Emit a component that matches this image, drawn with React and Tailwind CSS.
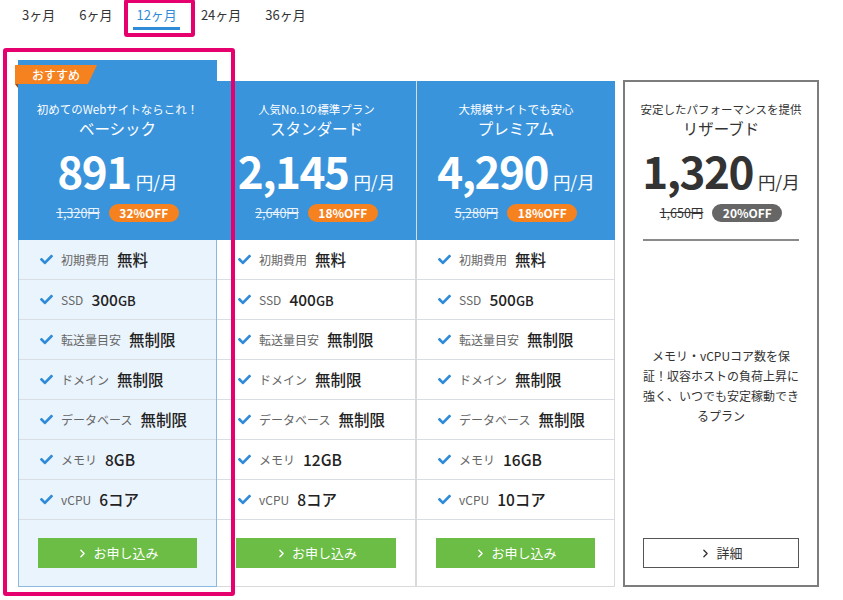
import { FaCheck } from 'react-icons/fa'
import { ChevronRight } from 'lucide-react'

const plans = [
  {
    id: 'basic',
    sub: '初めてのWebサイトならこれ！',
    name: 'ベーシック',
    price: '891',
    old: '1,320円',
    off: '32%OFF',
    ssd: '300',
    mem: '8GB',
    cpu: '6コア',
  },
  {
    id: 'standard',
    sub: '人気No.1の標準プラン',
    name: 'スタンダード',
    price: '2,145',
    old: '2,640円',
    off: '18%OFF',
    ssd: '400',
    mem: '12GB',
    cpu: '8コア',
  },
  {
    id: 'premium',
    sub: '大規模サイトでも安心',
    name: 'プレミアム',
    price: '4,290',
    old: '5,280円',
    off: '18%OFF',
    ssd: '500',
    mem: '16GB',
    cpu: '10コア',
  },
]

const tabs = ['3ヶ月', '6ヶ月', '12ヶ月', '24ヶ月', '36ヶ月']

function PriceBlock({ plan, dark }) {
  const ink = dark ? 'text-[#333]' : 'text-white'
  return (
    <div className="whitespace-nowrap">
      <p className={`text-[11.5px] leading-[18px] ${ink}`}>{plan.sub}</p>
      <p className={`text-[15.5px] leading-[20px] ${ink}`}>{plan.name}</p>
      <div className={`mt-[6px] flex h-[52px] items-baseline justify-center gap-[5px] ${ink}`}>
        <span className="text-[44px] font-semibold leading-[52px] tracking-[-1.5px]">{plan.price}</span>
        <span className="text-[17.5px] leading-none">円/月</span>
      </div>
      <div className="mt-[5px] flex h-[24px] items-center justify-center gap-[9px]">
        <span className={`text-[12.5px] line-through ${dark ? 'text-[#333]' : 'text-[#e8f2fb]'}`}>{plan.old}</span>
        <span
          className={`flex h-[18px] w-[70px] items-center justify-center rounded-full text-[12px] font-semibold text-white ${
            dark ? 'bg-[#666]' : 'bg-[#f5821f]'
          }`}
        >
          {plan.off}
        </span>
      </div>
    </div>
  )
}

function Features({ plan }) {
  const rows = [
    ['初期費用', '無料'],
    [
      'SSD',
      <>
        {plan.ssd}
        <span className="text-[13px]">GB</span>
      </>,
    ],
    ['転送量目安', '無制限'],
    ['ドメイン', '無制限'],
    ['データベース', '無制限'],
    ['メモリ', plan.mem],
    ['vCPU', plan.cpu],
  ]
  return (
    <ul>
      {rows.map(([label, value]) => (
        <li key={label} className="flex h-[40px] items-center border-b border-[#d8dee4] pl-[21px]">
          <FaCheck className="h-[13px] w-[13px] text-[#2f8bd8]" />
          <span className="ml-[8px] text-[12px] text-[#666]">{label}</span>
          <span className="ml-[8px] text-[15.5px] font-medium text-[#222]">{value}</span>
        </li>
      ))}
    </ul>
  )
}

function ApplyButton() {
  return (
    <div className="px-[19px] pt-[18px] pb-[18px]">
      <div className="flex h-[30px] items-center justify-center gap-[4px] bg-[#6bbd45] text-[13px] text-white">
        <ChevronRight size={13} strokeWidth={2.5} />
        お申し込み
      </div>
    </div>
  )
}

export default function App() {
  return (
    <div
      className="relative h-[600px] w-[843px] overflow-hidden bg-white"
      style={{ fontFamily: '"Noto Sans CJK JP", "Noto Sans", sans-serif' }}
    >
      {/* period tabs */}
      <div className="flex pl-[10px]">
        {tabs.map((t) => (
          <div
            key={t}
            className={`mx-[9px] px-[3px] pt-[6px] text-[13px] leading-[18px] ${
              t === '12ヶ月' ? 'border-b-[3px] border-[#2f8bd8] pb-[3px] text-[#2f8bd8]' : 'pb-[6px] text-[#333]'
            }`}
          >
            {t}
          </div>
        ))}
      </div>

      {/* plan cards */}
      <div className="mt-[30px] flex items-start pl-[18px]">
        {plans.map((plan) => {
          const basic = plan.id === 'basic'
          return (
            <div
              key={plan.id}
              className={`relative w-[199px] ${basic ? '' : 'mt-[21px] w-[198px]'} ${
                plan.id === 'premium' ? 'border-l border-[#dadada]' : ''
              }`}
            >
              {basic && (
                <>
                  <div className="absolute top-[5px] left-[-3px] flex h-[19px] w-[82px] items-center pl-[17px] text-[12px] font-medium text-white bg-[#f5821f] [clip-path:polygon(0_0,100%_0,89%_100%,0_100%)]">
                    おすすめ
                  </div>
                  <div className="absolute top-[24px] left-[-3px] h-0 w-0 border-t-[4px] border-l-[3px] border-t-[#9a4a12] border-l-transparent" />
                </>
              )}
              <div className={`bg-[#3a94dc] pb-[15px] text-center ${basic ? 'pt-[40px]' : 'pt-[19px]'}`}>
                <PriceBlock plan={plan} />
              </div>
              <div
                className={
                  basic
                    ? 'border-x border-b border-[#8db8df] bg-[#eaf4fc]'
                    : 'border-r border-b border-[#dadada] bg-white'
                }
              >
                <Features plan={plan} />
                <ApplyButton />
              </div>
            </div>
          )
        })}

        {/* reserved */}
        <div className="mt-[20px] ml-[8px] flex h-[507px] w-[196px] flex-col border-2 border-[#7d7d7d] text-center">
          <div className="pt-[18px] pb-[14px]">
            <PriceBlock
              dark
              plan={{ sub: '安定したパフォーマンスを提供', name: 'リザーブド', price: '1,320', old: '1,650円', off: '20%OFF' }}
            />
          </div>
          <div className="mx-[18px] h-[2px] bg-[#8a8a8a]" />
          <div className="flex flex-1 items-center justify-center pb-[8px]">
            <p className="text-[12px] leading-[20px] text-[#333]">
              メモリ・vCPUコア数を保
              <br />
              証！収容ホストの負荷上昇に
              <br />
              強く、いつでも安定稼動でき
              <br />
              るプラン
            </p>
          </div>
          <div className="mx-[18px] mb-[17px] flex h-[30px] items-center justify-center gap-[4px] border border-[#555] text-[13px] text-[#333]">
            <ChevronRight size={13} strokeWidth={2.5} />
            詳細
          </div>
        </div>
      </div>

      {/* highlight annotations */}
      <div className="pointer-events-none absolute top-[-1px] left-[124px] h-[38px] w-[71px] rounded-[3px] border-[4px] border-[#e6006e]" />
      <div className="pointer-events-none absolute top-[48px] left-[3px] h-[548px] w-[232px] rounded-[3px] border-[4px] border-[#e6006e]" />
    </div>
  )
}
